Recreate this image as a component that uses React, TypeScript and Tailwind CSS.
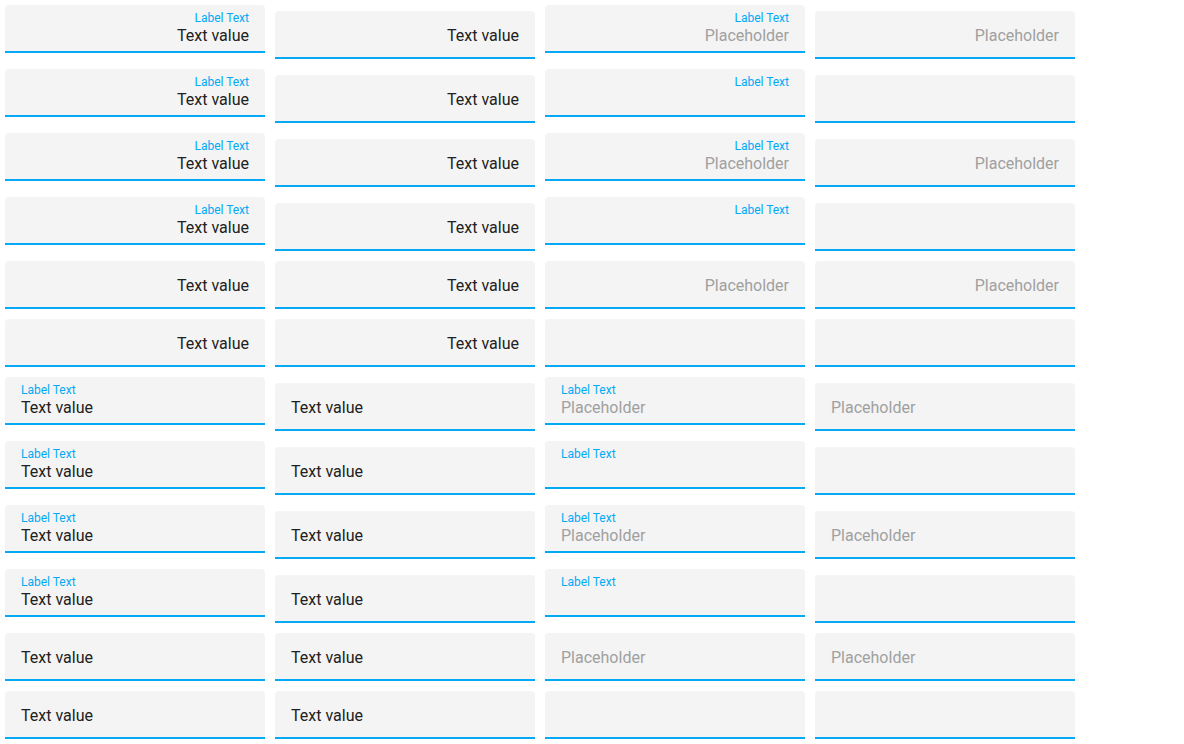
type Cell = { label?: boolean; value?: 'text' | 'placeholder' }

function Field({ cell, right, offset }: { cell: Cell; right: boolean; offset: boolean }) {
  const align = right ? 'text-right' : 'text-left'
  const valueGap = cell.label ? 'mt-[1px]' : ''
  return (
    <div
      className={`w-[260px] h-[48px] mx-[5px] mb-[5px] ${offset ? 'mt-[11px]' : 'mt-[5px]'} bg-[#f4f4f4] rounded-t-[4px] border-b-2 border-[#03a9f4] px-4 flex flex-col ${
        cell.label ? 'pt-[6px]' : 'pt-[15px]'
      } ${align}`}
    >
      {cell.label && <div className="text-[12px] leading-[14px] text-[#03a9f4]">Label Text</div>}
      {cell.value === 'text' && (
        <div className={`text-[16px] leading-[20px] text-[#212121] ${valueGap}`}>Text value</div>
      )}
      {cell.value === 'placeholder' && (
        <div className={`text-[16px] leading-[20px] text-[#a0a0a0] ${valueGap}`}>Placeholder</div>
      )}
    </div>
  )
}

const labeledA: Cell[] = [
  { label: true, value: 'text' },
  { value: 'text' },
  { label: true, value: 'placeholder' },
  { value: 'placeholder' },
]
const labeledB: Cell[] = [{ label: true, value: 'text' }, { value: 'text' }, { label: true }, {}]
const plainA: Cell[] = [{ value: 'text' }, { value: 'text' }, { value: 'placeholder' }, { value: 'placeholder' }]
const plainB: Cell[] = [{ value: 'text' }, { value: 'text' }, {}, {}]

const block = [labeledA, labeledB, labeledA, labeledB, plainA, plainB]

function Row({ cells, right }: { cells: Cell[]; right: boolean }) {
  const labeledRow = cells.some(c => c.label)
  return (
    <div className="flex items-start">
      {cells.map((c, i) => (
        <Field key={i} cell={c} right={right} offset={labeledRow && !c.label} />
      ))}
    </div>
  )
}

export default function App() {
  return (
    <div className="w-[1184px] h-[744px] bg-white overflow-hidden font-['Roboto',sans-serif]">
      {block.map((cells, i) => (
        <Row key={`r${i}`} cells={cells} right />
      ))}
      {block.map((cells, i) => (
        <Row key={`l${i}`} cells={cells} right={false} />
      ))}
    </div>
  )
}
